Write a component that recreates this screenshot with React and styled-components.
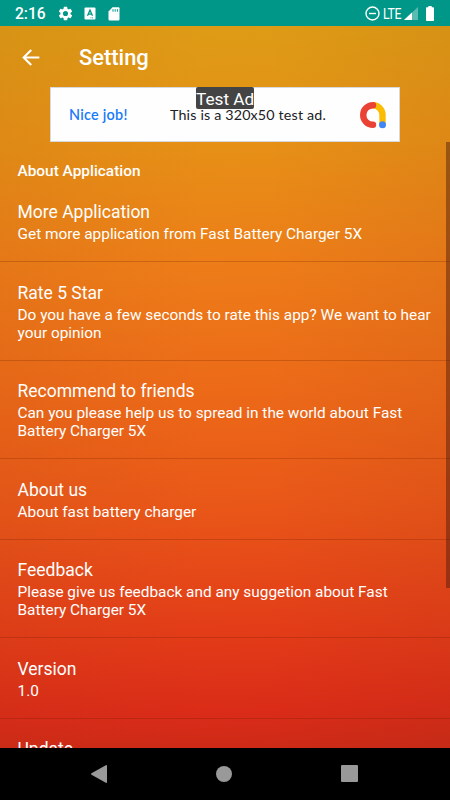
import React from "react";
import styled, { createGlobalStyle } from "styled-components";

const Global = createGlobalStyle`
  * { box-sizing: border-box; }
  body { margin: 0; font-family: Roboto, sans-serif; color: #fff; }
`;
const Screen = styled.div`
  width: 450px; height: 800px; display: flex; flex-direction: column; overflow: hidden;
`;
const StatusBar = styled.header`
  height: 26px; flex: none; display: flex; align-items: center; justify-content: space-between;
  padding: 1px 16px 0 15px; background: #009788;
`;
const StatusGroup = styled.div`
  display: flex; align-items: center;
`;
const Clock = styled.span`
  font-size: 15.6px; font-weight: 500; line-height: 20px; width: 31px; margin-right: 11px;
`;
const Network = styled.span`
  width: 18px; margin-left: 3px; font-size: 14px; line-height: 20px; letter-spacing: -0.5px;
  transform: translateY(-0.5px) scaleX(0.88); transform-origin: left;
`;
const Glyph = styled.svg`
  display: block; flex: none; margin-left: ${(p) => p.$left || 0}px;
`;
const Body = styled.main`
  height: 722px; flex: none; overflow: hidden; position: relative;
  background:
    linear-gradient(90deg, rgba(140, 50, 20, 0.08), rgba(140, 50, 20, 0) 45%, rgba(140, 50, 20, 0) 60%, rgba(120, 50, 20, 0.08)),
    linear-gradient(178deg, #dd9c15 0%, #e69016 17%, #ed7d18 33%, #ec6a18 50%, #e95718 66%, #e23b18 84%, #da2c18 94%, #cb2a17 100%);
`;
const AppBar = styled.div`
  height: 61px; display: flex; align-items: center; padding: 2px 0 0 18px;
`;
const AppTitle = styled.h1`
  margin: 1px 0 0 36px; font-size: 21.9px; line-height: 28px; font-weight: 500;
`;
const AdBanner = styled.section`
  position: relative; width: 350px; height: 55px; margin: 0 auto; display: flex; align-items: center;
  padding: 0 12px 0 18px; background: #fefefe; border: 1px solid #d5d9dc;
  font-family: Lato, sans-serif;
`;
const AdPraise = styled.span`
  width: 101px; color: #1a7af8; font-size: 14.4px; font-weight: 600; letter-spacing: 0.26px;
`;
const AdText = styled.span`
  flex: 1; color: #202124; font-size: 14.3px; letter-spacing: 0.16px; white-space: nowrap;
`;
const AdTag = styled.span`
  position: absolute; top: -1px; left: 145px; width: 58px; height: 22px; border-radius: 2px;
  background: #444; font: 17.2px/24px Roboto, sans-serif; text-align: center; white-space: nowrap;
`;
const SectionTitle = styled.h2`
  margin: 0; height: 39.5px; padding: 19px 17.5px 0; font-size: 15.4px; line-height: 20px; font-weight: 500;
`;
const Row = styled.article`
  padding: 18.5px 17.5px 18px; border-bottom: 1px solid rgba(90, 20, 0, 0.22);
`;
const RowTitle = styled.h3`
  margin: 0; font-size: 17.5px; line-height: 25px; font-weight: 400;
`;
const RowText = styled.p`
  margin: 0; font-size: 15.38px; line-height: 18px; white-space: pre-line;
`;
const ScrollThumb = styled.div`
  position: absolute; right: 0; top: 116px; width: 4px; height: 446px; background: rgba(70, 25, 10, 0.45);
`;
const NavBar = styled.nav`
  height: 52px; flex: none; display: flex; align-items: center; justify-content: space-between;
  padding: 0 92px 1px 91px; background: #000;
`;

const rows = [
  ["More Application", "Get more application from Fast Battery Charger 5X"],
  ["Rate 5 Star", "Do you have a few seconds to rate this app? We want to hear\nyour opinion"],
  ["Recommend to friends", "Can you please help us to spread in the world about Fast\nBattery Charger 5X"],
  ["About us", "About fast battery charger"],
  ["Feedback", "Please give us feedback and any suggetion about Fast\nBattery Charger 5X"],
  ["Version", "1.0"],
  ["Update"],
];

export default function App() {
  return (
    <Screen>
      <Global />
      <StatusBar>
        <StatusGroup>
          <Clock>2:16</Clock>
          <Glyph width="17" height="17" viewBox="0 0 24 24" fill="#fff">
            <path d="M19.14 12.94c.04-.3.06-.61.06-.94s-.02-.64-.07-.94l2.03-1.58a.5.5 0 0 0 .12-.61l-1.92-3.32a.49.49 0 0 0-.59-.22l-2.39.96a7 7 0 0 0-1.62-.94l-.36-2.54A.48.48 0 0 0 13.92 2.4h-3.84a.48.48 0 0 0-.47.41l-.36 2.54a7.3 7.3 0 0 0-1.62.94l-2.39-.96a.48.48 0 0 0-.59.22L2.74 8.87a.48.48 0 0 0 .12.61l2.03 1.58a6 6 0 0 0 0 1.88l-2.03 1.58a.5.5 0 0 0-.12.61l1.92 3.32c.12.22.37.29.59.22l2.39-.96c.5.38 1.03.7 1.62.94l.36 2.54c.05.24.24.41.48.41h3.84c.24 0 .44-.17.47-.41l.36-2.54a7 7 0 0 0 1.62-.94l2.39.96c.22.08.47 0 .59-.22l1.92-3.32a.48.48 0 0 0-.12-.61zM12 15.6a3.6 3.6 0 1 1 0-7.2 3.6 3.6 0 0 1 0 7.2z" />
          </Glyph>
          <Glyph $left={10} width="12" height="13" viewBox="0 0 12 13">
            <rect x="0.5" y="0.5" width="11" height="12" rx="1" fill="#fff" />
            <path d="M3.5 8.8 6 3.2 8.5 8.8M4.3 7.2h3.4" fill="none" stroke="#009788" strokeWidth="1.3" />
            <path d="M6.5 10.8h3" stroke="#009788" strokeWidth="0.8" strokeDasharray="1 .5" />
          </Glyph>
          <Glyph $left={11.5} width="12" height="14" viewBox="0 0 12 14">
            <path d="M4.5 0.3H10.5q1 0 1 1V12.5q0 1-1 1H1.5q-1 0-1-1V4.5z" fill="#fff" />
            <path d="M5 2.2v2.5M7.2 2.2v2.5M9.4 2.2v2.5" stroke="#009788" strokeWidth="1" />
          </Glyph>
        </StatusGroup>
        <StatusGroup>
          <Glyph width="15" height="15" viewBox="0 0 15 15" fill="none" stroke="#fff" strokeWidth="1.4">
            <circle cx="7.5" cy="7.5" r="6.5" />
            <path d="M4 7.5h7" />
          </Glyph>
          <Network>LTE</Network>
          <Glyph $left={3.5} width="14" height="13" viewBox="0 0 14 13" fill="#fff">
            <path d="M14 0v13H0z" fillOpacity="0.35" />
            <path d="M8 5.57V13H0z" />
          </Glyph>
          <Glyph $left={8} width="8" height="15" viewBox="0 0 8 15" fill="#fff">
            <path d="M2.3 0h3.4v1.3H7.3q.7 0 .7.7v12.3q0 .7-.7.7H.7q-.7 0-.7-.7V2q0-.7.7-.7h1.6z" />
          </Glyph>
        </StatusGroup>
      </StatusBar>
      <Body>
        <AppBar>
          <Glyph width="25" height="25" viewBox="0 0 24 24" fill="#fff">
            <path d="M20.5 11H7.83l5.59-5.59L12 4l-8 8 8 8 1.41-1.41L7.83 13H20.5z" />
          </Glyph>
          <AppTitle>Setting</AppTitle>
        </AppBar>
        <AdBanner>
          <AdPraise>Nice job!</AdPraise>
          <AdText>This is a 320x50 test ad.</AdText>
          <Glyph width="28" height="28" viewBox="0 0 28 28" fill="none" strokeWidth="6.4" strokeLinecap="round">
            <path d="M14 4.2a9.8 9.8 0 0 1 9.5 10v8.5" stroke="#fbbc04" strokeLinecap="butt" />
            <path d="M14 4.2a9.8 9.8 0 0 0 0 19.6" stroke="#ea4335" />
            <circle cx="23.5" cy="23.7" r="3.5" fill="#4285f4" />
          </Glyph>
          <AdTag>Test Ad</AdTag>
        </AdBanner>
        <SectionTitle>About Application</SectionTitle>
        {rows.map(([title, text]) => (
          <Row key={title}>
            <RowTitle>{title}</RowTitle>
            {text && <RowText>{text}</RowText>}
          </Row>
        ))}
        <ScrollThumb />
      </Body>
      <NavBar>
        <Glyph width="16" height="18" viewBox="0 0 16 18" fill="#999">
          <path d="M.5 8.3 14.8.2q1.2-.5 1.2.8v16q0 1.3-1.2.8L.5 9.7q-.8-.7 0-1.4z" />
        </Glyph>
        <Glyph width="16" height="16" viewBox="0 0 16 16" fill="#999">
          <circle cx="8" cy="8" r="8" />
        </Glyph>
        <Glyph width="17" height="17" viewBox="0 0 17 17" fill="#999">
          <rect width="17" height="17" rx="1" />
        </Glyph>
      </NavBar>
    </Screen>
  );
}
